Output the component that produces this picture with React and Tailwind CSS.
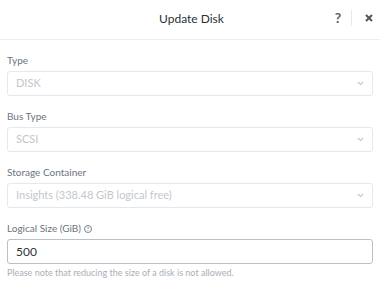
const FIELDS = [
  { label: 'Type', value: 'DISK' },
  { label: 'Bus Type', value: 'SCSI' },
  { label: 'Storage Container', value: 'Insights (338.48 GiB logical free)' },
]

function Chevron() {
  return (
    <svg width="7" height="5" viewBox="0 0 7 5" fill="none">
      <path d="M1 1.2l2.5 2.4L6 1.2" stroke="#b9bec5" strokeWidth="1.1" />
    </svg>
  )
}

function DisabledSelect({ label, value }) {
  return (
    <div className="mb-[13px]">
      <div className="h-[14px] leading-[14px] text-[10px] text-[#6b7480] mb-[4px]">{label}</div>
      <div className="h-[25px] flex items-center justify-between rounded-[3px] border border-[#e5e8ec] pl-[8px] pr-[8px]">
        <span className="text-[11px] text-[#c3c7cd]">{value}</span>
        <Chevron />
      </div>
    </div>
  )
}

export default function App() {
  return (
    <div className="w-[380px] h-[286px] bg-white overflow-hidden" style={{ fontFamily: 'Lato, "Open Sans", sans-serif' }}>
      {/* Header */}
      <div className="h-[40px] border-b border-[#eceef1] flex items-center relative">
        <div className="flex-1 text-center text-[12px] text-[#2b2f36] pl-[3px] -mt-[2px]">Update Disk</div>
        <div className="absolute right-0 top-0 h-full flex items-center -mt-[2px]">
          <span className="text-[14px] font-bold text-[#59606c] w-[8px] text-center">?</span>
          <div className="w-px h-[16px] bg-[#e6e8eb] ml-[9px] mr-[13px]" />
          <svg width="8" height="8" viewBox="0 0 8 8" className="mr-[7px] mt-[1px]">
            <path d="M1 1l6 6M7 1L1 7" stroke="#4f5661" strokeWidth="2" />
          </svg>
        </div>
      </div>

      <div className="px-[7px] pt-[13px]">
        {FIELDS.map(f => <DisabledSelect key={f.label} {...f} />)}

        <div>
          <div className="h-[14px] flex items-center text-[10px] text-[#6b7480] mb-[4px]">
            Logical Size (GiB)
            <span className="ml-[3px] mt-[2px] w-[8px] h-[8px] rounded-full border border-[#7a828d] text-[6px] leading-none flex items-center justify-center">?</span>
          </div>
          <div className="h-[25px] flex items-center rounded-[3px] border border-[#b9c0ca] px-[8px]">
            <span className="text-[12px] text-[#2e333a]">500</span>
          </div>
          <div className="text-[9px] leading-[12px] text-[#a9afb7] mt-[3px]">Please note that reducing the size of a disk is not allowed.</div>
        </div>
      </div>
    </div>
  )
}
